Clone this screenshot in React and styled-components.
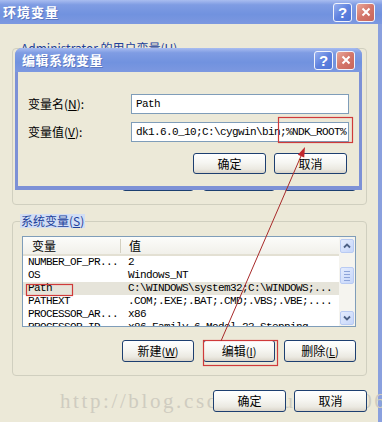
import React from "react";
import styled, { createGlobalStyle } from "styled-components";

const cjk = `"Noto Sans CJK SC", "Noto Sans", sans-serif`;
const mono = `"Liberation Mono", "DejaVu Sans Mono", monospace`;

const GlobalStyle = createGlobalStyle`
  html, body { margin: 0; padding: 0; background: #ece9d8; }
  body { font-family: ${cjk}; font-size: 12px; color: #000; }
  * { box-sizing: border-box; }
`;

const Window = styled.div`
  position: relative;
  width: 382px;
  height: 422px;
  display: flex;
  flex-direction: column;
  overflow: hidden;
  background: #ece9d8;
`;

const TitleBar = styled.div`
  height: 24px;
  flex: none;
  display: flex;
  align-items: center;
  justify-content: space-between;
  padding: 0 ${(p) => p.$pr}px 0 ${(p) => p.$pl}px;
  background: linear-gradient(180deg, #a9bdf0 0%, #7f9ce3 20%, #7192df 60%, #7c98e0 100%);
  border-radius: ${(p) => (p.$round ? "7px 7px 0 0" : "0")};
`;

const Title = styled.span`
  color: #fff;
  font: bold 13px/16px ${cjk};
  letter-spacing: ${(p) => p.$ls}px;
  text-shadow: 1px 1px 0 rgba(40, 60, 130, 0.35);
`;

const CapButtons = styled.div`
  display: flex;
  gap: ${(p) => p.$gap}px;
`;

const CapButton = styled.div`
  width: ${(p) => p.$w}px;
  height: ${(p) => p.$w}px;
  border: 1px solid #f2f4fb;
  border-radius: 3px;
  display: flex;
  align-items: center;
  justify-content: center;
  color: #fff;
  font: bold 15px/1 "Liberation Sans", sans-serif;
  background: ${(p) =>
    p.$close
      ? "linear-gradient(135deg, #e8a79a 0%, #d4766a 50%, #c8655a 100%)"
      : "linear-gradient(135deg, #97b0f0 0%, #5f82df 50%, #4f74d6 100%)"};
`;

const Body = styled.div`
  flex: 1;
  display: flex;
  flex-direction: column;
  padding: 17px 11px 0 12px;
  border-right: 4px solid #8aa0de;
`;

const Group = styled.fieldset`
  margin: ${(p) => p.$mt || 0}px 0 0 0;
  padding: 8px 10px 13px 9px;
  border: 1px solid #d0cfbf;
  border-radius: 4px;
  min-width: 0;
  display: flex;
  flex-direction: column;
`;

const Legend = styled.legend`
  padding: 0 1px;
  margin-left: -2px;
  font: 12px/14px ${cjk};
  color: #21409a;
  background: ${(p) => (p.$focus ? "#d2def4" : "transparent")};
`;

const ListBox = styled.div`
  height: ${(p) => p.$h}px;
  flex: none;
  border: 1px solid #7f9db9;
  background: #fff;
  display: flex;
  overflow: hidden;
`;

const ListMain = styled.div`
  flex: 1;
  min-width: 0;
  display: flex;
  flex-direction: column;
  overflow: hidden;
`;

const Header = styled.div`
  height: 19px;
  flex: none;
  display: grid;
  grid-template-columns: 98px 1fr;
  background: linear-gradient(180deg, #fcfcfa 0%, #f1f0ea 100%);
  border-bottom: 2px solid #e3e0d3;
  font: 12px/17px ${cjk};
`;

const HeadCell = styled.div`
  padding-left: ${(p) => p.$pl}px;
  border-right: ${(p) => (p.$sep ? "1px solid #d3d0c1" : "none")};
  margin: 2px 0 1px;
  line-height: 14px;
`;

const Row = styled.div`
  height: 13px;
  flex: none;
  display: grid;
  grid-template-columns: 100px 1fr;
  background: ${(p) => (p.$sel ? "#e6e4da" : "transparent")};
  font: 11px/13px ${mono};
  letter-spacing: -0.6px;
  white-space: nowrap;
`;

const Cell = styled.div`
  padding-left: 5px;
  overflow: hidden;
`;

const ScrollBar = styled.div`
  width: 16px;
  flex: none;
  display: flex;
  flex-direction: column;
  padding: 2px 1px 1px 1px;
  background: #f5f4ef;
`;

const ScrollBtn = styled.div`
  width: 14px;
  height: ${(p) => p.$h || 14}px;
  flex: none;
  margin-top: ${(p) => p.$mt || 0}px;
  border: 1px solid #b9cbf3;
  border-radius: 2px;
  background: linear-gradient(135deg, #e4ecfd 0%, #c6d6fa 100%);
  display: flex;
  flex-direction: column;
  align-items: center;
  justify-content: center;
  gap: 2px;
`;

const Grip = styled.span`
  width: 6px;
  height: 1px;
  background: #8da4d9;
`;

const Track = styled.div`
  flex: 1;
`;

const ButtonRow = styled.div`
  display: flex;
  justify-content: flex-end;
  gap: ${(p) => p.$gap}px;
  margin-top: ${(p) => p.$mt}px;
  padding-right: ${(p) => p.$pr || 0}px;
  position: relative;
  z-index: 1;
`;

const Button = styled.div`
  width: ${(p) => p.$w}px;
  height: ${(p) => p.$h}px;
  border: 1px solid #1d3f70;
  border-radius: 3px;
  background: linear-gradient(180deg, #ffffff 0%, #f6f6f2 45%, #ebe9e1 80%, #d9d4c9 100%);
  font: 12px/14px ${cjk};
  color: #000;
  display: flex;
  align-items: center;
  justify-content: center;
`;

const Key = styled.span`
  font-size: 11px;
  u {
    text-underline-offset: 1px;
  }
`;

const Modal = styled.div`
  position: absolute;
  left: 15px;
  top: 48px;
  width: 347px;
  height: 142px;
  display: flex;
  flex-direction: column;
  background: #7d91d6;
  border-radius: 7px 7px 0 0;
  z-index: 5;
`;

const ModalBody = styled.div`
  flex: 1;
  margin: 0 3px 4px;
  background: #ece9d8;
  padding: 22px 10px 0 10px;
  display: flex;
  flex-direction: column;
  gap: 8px;
`;

const FieldRow = styled.div`
  display: grid;
  grid-template-columns: 103px 1fr;
  align-items: center;
  height: 20px;
`;

const Label = styled.span`
  font: 12px/14px ${cjk};
`;

const Input = styled.input`
  height: 20px;
  width: 218px;
  border: 1px solid #7f9db9;
  background: #fff;
  padding: 0 0 0 4px;
  margin: 0;
  font: 11px/18px ${mono};
  letter-spacing: -0.6px;
  color: #000;
  outline: none;
`;

const Watermark = styled.div`
  position: absolute;
  left: 60px;
  top: 389px;
  font: 21px/24px "Liberation Serif", serif;
  letter-spacing: 2.6px;
  color: #cfccc0;
  white-space: nowrap;
  z-index: 0;
`;

const Overlay = styled.svg`
  position: absolute;
  left: 0;
  top: 0;
  width: 382px;
  height: 422px;
  pointer-events: none;
  z-index: 10;
`;

const Chevron = ({ down }) => (
  <svg width="8" height="6" viewBox="0 0 8 6">
    <path
      d={down ? "M1 1.5 L4 4.5 L7 1.5" : "M1 4.5 L4 1.5 L7 4.5"}
      fill="none"
      stroke="#4d6185"
      strokeWidth="1.8"
    />
  </svg>
);

const CloseGlyph = () => (
  <svg width="10" height="10" viewBox="0 0 10 10">
    <path d="M1.5 1.5 L8.5 8.5 M8.5 1.5 L1.5 8.5" stroke="#fff" strokeWidth="2" />
  </svg>
);

const Caption = ({ w, gap }) => (
  <CapButtons $gap={gap}>
    <CapButton $w={w}>?</CapButton>
    <CapButton $w={w} $close>
      <CloseGlyph />
    </CapButton>
  </CapButtons>
);

const Btn = ({ text, k, w = 72, h = 22 }) => (
  <Button $w={w} $h={h}>
    {text}
    {k && (
      <Key>
        (<u>{k}</u>)
      </Key>
    )}
  </Button>
);

const sysRows = [
  ["NUMBER_OF_PR...", "2"],
  ["OS", "Windows_NT"],
  ["Path", "C:\\WINDOWS\\system32;C:\\WINDOWS;..."],
  ["PATHEXT", ".COM;.EXE;.BAT;.CMD;.VBS;.VBE;...."],
  ["PROCESSOR_AR...", "x86"],
  ["PROCESSOR_ID...", "x86 Family 6 Model 23 Stepping"],
];

const userRows = [
  ["TEMP", "%USERPROFILE%\\Local Settings\\Temp"],
  ["TMP", "%USERPROFILE%\\Local Settings\\Temp"],
];

const VarList = ({ rows, h, sel }) => (
  <ListBox $h={h}>
    <ListMain>
      <Header>
        <HeadCell $pl={9} $sep>
          变量
        </HeadCell>
        <HeadCell $pl={8}>值</HeadCell>
      </Header>
      {rows.map(([n, v]) => (
        <Row key={n} $sel={n === sel}>
          <Cell>{n}</Cell>
          <Cell>{v}</Cell>
        </Row>
      ))}
    </ListMain>
    <ScrollBar>
      <ScrollBtn>
        <Chevron />
      </ScrollBtn>
      <ScrollBtn $mt={14} $h={17}>
        <Grip />
        <Grip />
        <Grip />
        <Grip />
      </ScrollBtn>
      <Track />
      <ScrollBtn>
        <Chevron down />
      </ScrollBtn>
    </ScrollBar>
  </ListBox>
);

export default function App() {
  return (
    <>
      <GlobalStyle />
      <Window>
        <TitleBar $pl={3} $pr={7}>
          <Title $ls={1}>环境变量</Title>
          <Caption w={19} gap={4} />
        </TitleBar>
        <Body>
          <Group>
            <Legend>Administrator 的用户变量(U)</Legend>
            <VarList rows={userRows} h={93} />
            <ButtonRow $gap={9} $mt={13}>
              <Btn text="新建" k="N" />
              <Btn text="编辑" k="E" />
              <Btn text="删除" k="D" />
            </ButtonRow>
          </Group>
          <Group $mt={9}>
            <Legend $focus>
              系统变量(<u>S</u>)
            </Legend>
            <VarList rows={sysRows} h={91} sel="Path" />
            <ButtonRow $gap={9} $mt={13}>
              <Btn text="新建" k="W" />
              <Btn text="编辑" k="I" />
              <Btn text="删除" k="L" />
            </ButtonRow>
          </Group>
          <ButtonRow $gap={8} $mt={14}>
            <Btn text="确定" w={73} />
            <Btn text="取消" w={73} />
          </ButtonRow>
        </Body>

        <Watermark>http://blog.csdn.net/u013140689</Watermark>

        <Modal>
          <TitleBar $round $pl={7} $pr={7}>
            <Title $ls={0.5}>编辑系统变量</Title>
            <Caption w={19} gap={3} />
          </TitleBar>
          <ModalBody>
            <FieldRow>
              <Label>
                变量名(<u>N</u>):
              </Label>
              <Input readOnly value="Path" />
            </FieldRow>
            <FieldRow>
              <Label>
                变量值(<u>V</u>):
              </Label>
              <Input readOnly value="dk1.6.0_10;C:\cygwin\bin;%NDK_ROOT%" />
            </FieldRow>
            <ButtonRow $gap={8} $mt={3} $pr={2}>
              <Btn text="确定" w={73} h={21} />
              <Btn text="取消" w={73} h={21} />
            </ButtonRow>
          </ModalBody>
        </Modal>

        <Overlay viewBox="0 0 382 422">
          <g fill="none" stroke="#cf3a3a" strokeWidth="1.2">
            <rect x="278.5" y="117.5" width="74" height="25" />
            <rect x="26.5" y="284.5" width="46" height="11" />
            <rect x="203.5" y="340.5" width="74" height="25" />
          </g>
          <line x1="221" y1="341" x2="301" y2="156" stroke="#a82a2a" strokeWidth="1" />
          <polygon points="305,147 304.2,157.6 297.8,154.8" fill="#c0272d" />
        </Overlay>
      </Window>
    </>
  );
}
